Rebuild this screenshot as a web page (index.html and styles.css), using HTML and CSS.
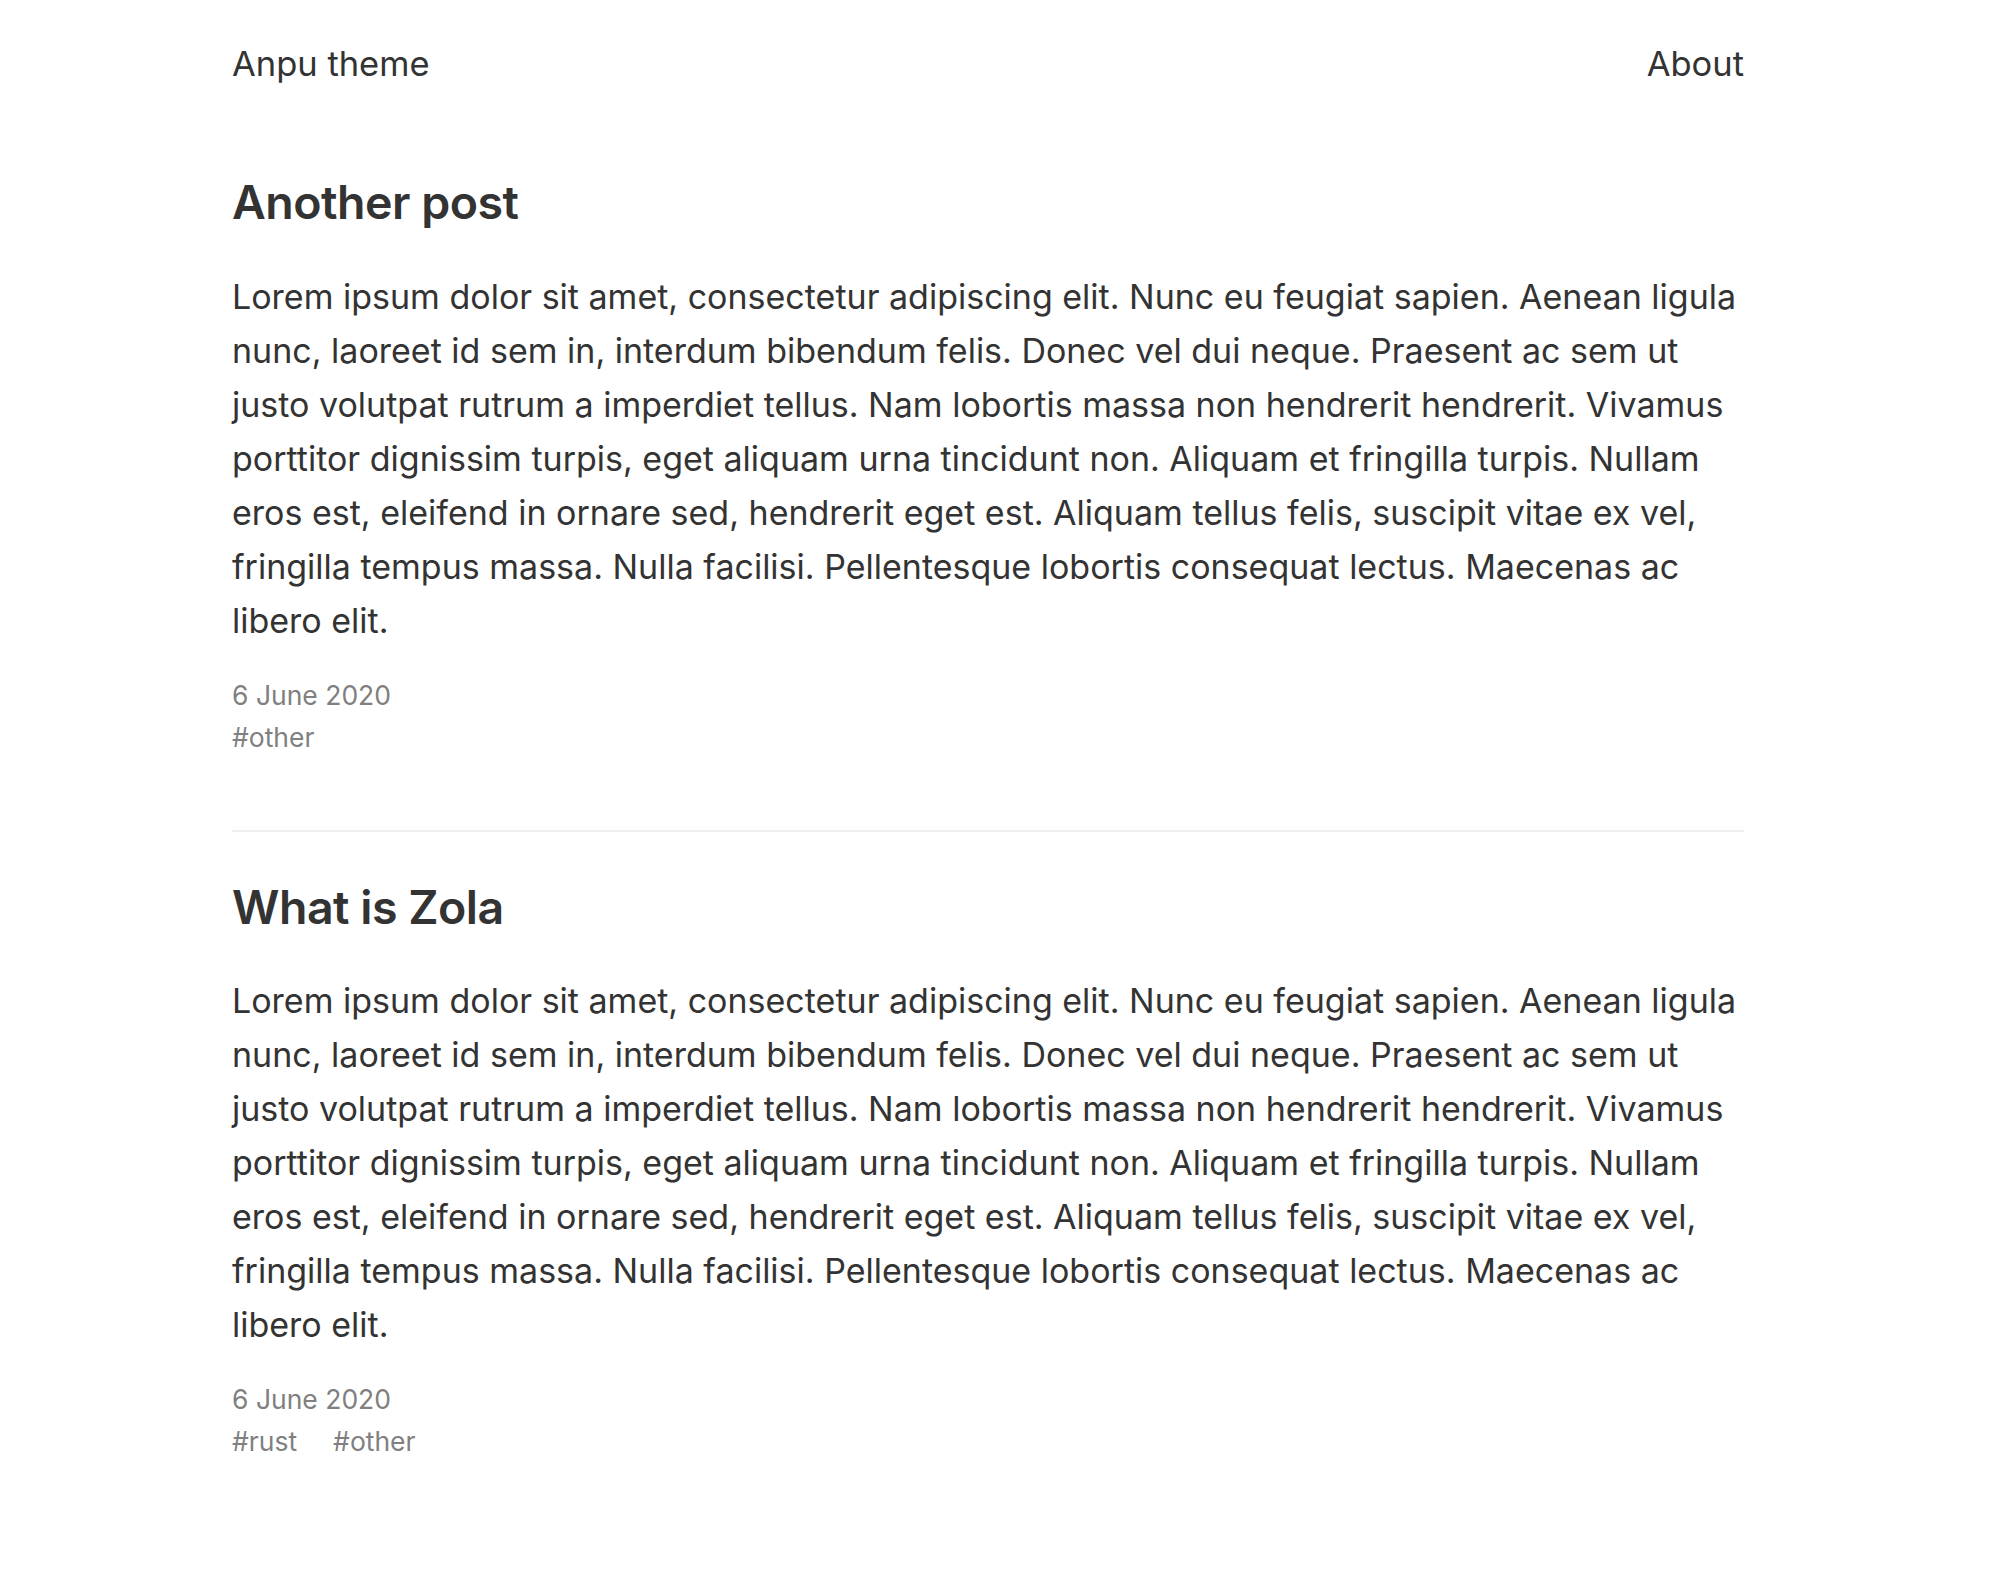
FILE: index.html
```html
<!DOCTYPE html>
<html lang="en">
<head>
<meta charset="utf-8">
<title>Anpu theme</title>
<link rel="stylesheet" href="styles.css">
</head>
<body>
<div class="page">
  <header class="site-header">
    <a class="brand" href="#">Anpu theme</a>
    <nav class="nav"><a href="#">About</a></nav>
  </header>
  <main class="posts">
    <article class="post">
      <h1 class="post-title">Another post</h1>
      <p class="post-body">Lorem ipsum dolor sit amet, consectetur adipiscing elit. Nunc eu feugiat sapien. Aenean ligula nunc, laoreet id sem in, interdum bibendum felis. Donec vel dui neque. Praesent ac sem ut justo volutpat rutrum a imperdiet tellus. Nam lobortis massa non hendrerit hendrerit. Vivamus porttitor dignissim turpis, eget aliquam urna tincidunt non. Aliquam et fringilla turpis. Nullam eros est, eleifend in ornare sed, hendrerit eget est. Aliquam tellus felis, suscipit vitae ex vel, fringilla tempus massa. Nulla facilisi. Pellentesque lobortis consequat lectus. Maecenas ac libero elit.</p>
      <div class="post-meta">
        <time class="post-date">6 June 2020</time>
        <div class="post-tags"><a href="#">#other</a></div>
      </div>
    </article>
    <hr class="divider">
    <article class="post">
      <h1 class="post-title">What is Zola</h1>
      <p class="post-body">Lorem ipsum dolor sit amet, consectetur adipiscing elit. Nunc eu feugiat sapien. Aenean ligula nunc, laoreet id sem in, interdum bibendum felis. Donec vel dui neque. Praesent ac sem ut justo volutpat rutrum a imperdiet tellus. Nam lobortis massa non hendrerit hendrerit. Vivamus porttitor dignissim turpis, eget aliquam urna tincidunt non. Aliquam et fringilla turpis. Nullam eros est, eleifend in ornare sed, hendrerit eget est. Aliquam tellus felis, suscipit vitae ex vel, fringilla tempus massa. Nulla facilisi. Pellentesque lobortis consequat lectus. Maecenas ac libero elit.</p>
      <div class="post-meta">
        <time class="post-date">6 June 2020</time>
        <div class="post-tags"><a href="#">#rust</a><a href="#">#other</a></div>
      </div>
    </article>
  </main>
</div>
</body>
</html>
```
FILE: styles.css
```css
html, body {
  margin: 0;
  padding: 0;
  background: #fff;
}
body {
  font-family: Inter, "Noto Sans", sans-serif;
  color: #333;
}
a {
  color: inherit;
  text-decoration: none;
}
.page {
  width: 1512px;
  margin: 0 0 0 232px;
}
.site-header {
  display: flex;
  justify-content: space-between;
  align-items: center;
  padding-top: 37px;
  font-size: 34.5px;
  line-height: 54px;
}
.posts {
  padding-top: 83px;
}
.post-title {
  margin: 0;
  font-size: 46.5px;
  line-height: 57.6px;
  font-weight: 600;
  letter-spacing: -0.5px;
}
.post-body {
  margin: 38px 0 0;
  font-size: 34px;
  line-height: 54px;
}
.post-meta {
  margin-top: 26px;
  font-size: 26.5px;
  line-height: 42px;
  color: #808080;
}
.post-tags {
  display: flex;
  gap: 36px;
}
.divider {
  margin: 72px 0 47px;
  border: 0;
  height: 2px;
  background: #efefef;
}
```
